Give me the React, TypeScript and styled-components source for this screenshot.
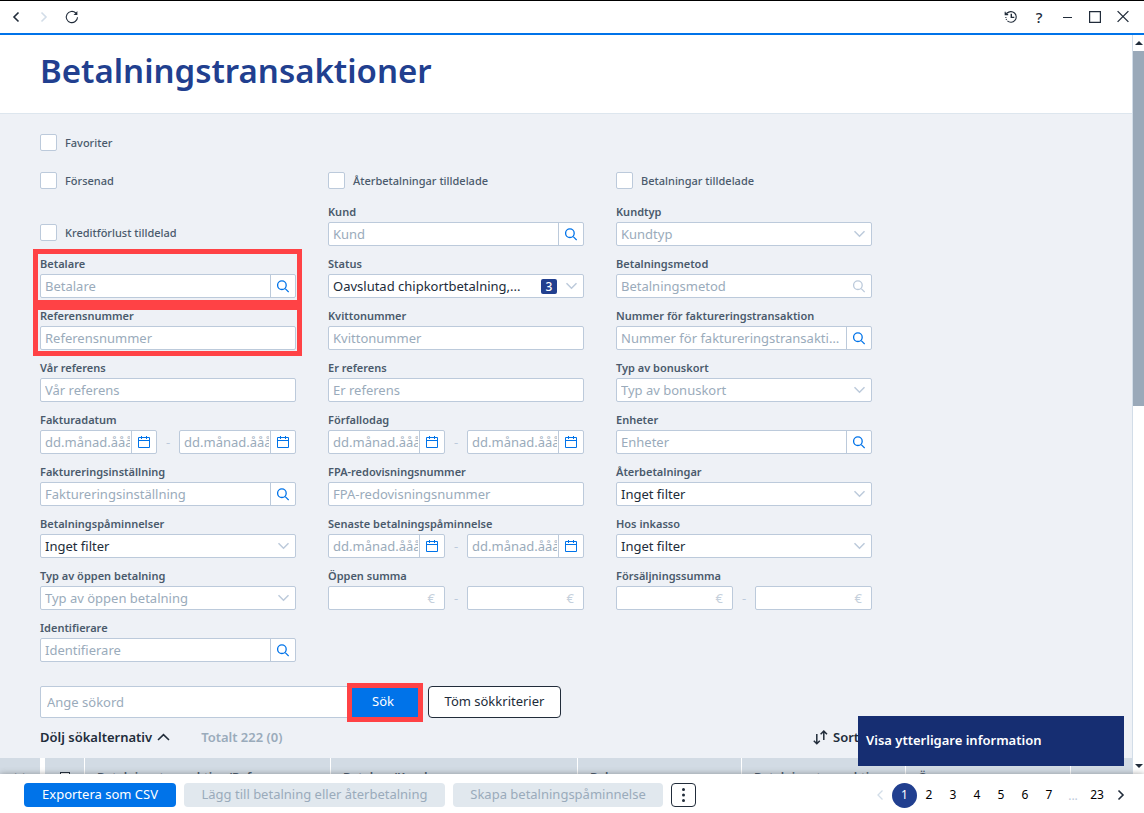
import React, { useId } from "react";
import styled, { createGlobalStyle } from "styled-components";

const color = {
  blue: "#0073e9",
  navy: "#213f8f",
  ink: "#212c3a",
  label: "#4a5a6c",
  muted: "#9aabbb",
  line: "#bccadb",
  faint: "#d2dde8",
  panel: "#eef1f6",
  head: "#d2dbe4",
  mark: "#ff4245",
};

const GlobalStyle = createGlobalStyle`
  *, *::before, *::after { box-sizing: border-box; }
  body {
    margin: 0;
    font-family: "Noto Sans", "Open Sans", sans-serif;
    font-size: 13px;
    color: ${color.ink};
    background: #fff;
  }
  button, input, select { font: inherit; color: inherit; }
  button { cursor: pointer; }
`;

const Window = styled.div`
  display: flex;
  flex-direction: column;
  height: 100vh;
  border-top: 1px solid #000;
`;

const TitleBar = styled.header`
  display: flex;
  flex: none;
  align-items: center;
  justify-content: space-between;
  height: 34px;
  padding: 0 9px 0 4px;
  border-bottom: 2px solid ${color.blue};
`;

const IconGroup = styled.div`
  display: flex;
  gap: 4px;
`;

const IconButton = styled.button<{ $faint?: boolean }>`
  display: flex;
  align-items: center;
  justify-content: center;
  width: 24px;
  height: 24px;
  padding: 0 0 1px;
  border: 0;
  background: none;
  font-weight: 500;
  font-size: 15px;
  color: ${(p) => (p.$faint ? color.faint : color.ink)};
`;

const Viewport = styled.div`
  display: flex;
  flex: 1;
  min-height: 0;
`;

const Content = styled.main`
  flex: 1;
  min-width: 0;
  overflow: hidden;
  border-right: 1px solid ${color.faint};
  background: ${color.panel};
`;

const PageHeader = styled.div`
  height: 79px;
  padding: 12px 40px;
  border-bottom: 1px solid #dde6ee;
  background: #fff;
`;

const Title = styled.h1`
  margin: 0;
  font-size: 33px;
  line-height: 48px;
  font-weight: 600;
  color: ${color.navy};
`;

const ScrollTrack = styled.div`
  display: flex;
  flex-direction: column;
  align-items: center;
  justify-content: space-between;
  flex: none;
  width: 11px;
  overflow: hidden;
`;

const ArrowBox = styled.span`
  display: flex;
  align-items: center;
  justify-content: center;
  height: 16px;
`;

const Thumb = styled.div`
  flex: none;
  width: 11px;
  height: 48%;
  margin-bottom: auto;
  background: #9aa9b9;
`;

const Filters = styled.form`
  padding: 20px 40px 0;
`;

const CheckRow = styled.div<{ $after: number }>`
  display: grid;
  grid-template-columns: repeat(3, 256px);
  column-gap: 32px;
  margin-bottom: ${(p) => p.$after}px;
`;

const CheckLabel = styled.label<{ $inGrid?: boolean }>`
  display: flex;
  align-items: center;
  align-self: end;
  gap: 8px;
  height: 17px;
  margin-bottom: ${(p) => (p.$inGrid ? 5 : 0)}px;
  font-size: 11px;
  line-height: 17px;
  font-weight: 500;
  color: ${color.label};
`;

const CheckBox = styled.input`
  appearance: none;
  flex: none;
  width: 17px;
  height: 17px;
  margin: 0;
  border: 1px solid ${color.line};
  border-radius: 2px;
  background: #fff;
`;

const FilterGrid = styled.div`
  display: grid;
  grid-template-columns: repeat(3, 256px);
  gap: 10px 32px;
`;

const FieldBox = styled.div`
  position: relative;
  min-width: 0;
`;

const FieldLabel = styled.label`
  display: block;
  height: 16px;
  margin-bottom: 2px;
  font-size: 11px;
  line-height: 16px;
  font-weight: 600;
  white-space: nowrap;
  color: ${color.label};
`;

const Control = styled.div`
  position: relative;
  display: flex;
  flex: 1;
  min-width: 0;
  height: 24px;
  border: 1px solid ${color.line};
  border-radius: 2px;
  background: #fff;
`;

const TextInput = styled.input`
  flex: 1;
  width: 0;
  min-width: 0;
  padding: 0;
  margin: 0 2px 0 4px;
  border: 0;
  outline: 0;
  background: none;
  text-overflow: ellipsis;
  &::placeholder { color: ${color.muted}; opacity: 1; }
`;

const DateInput = styled(TextInput)`
  margin-right: 1px;
  text-overflow: clip;
`;

const SideButton = styled.button<{ $plain?: boolean }>`
  display: flex;
  flex: none;
  align-items: center;
  justify-content: center;
  width: 25px;
  padding: 0;
  border: 0;
  border-left: ${(p) => (p.$plain ? "0" : `1px solid ${color.line}`)};
  background: none;
  color: ${(p) => (p.$plain ? color.line : color.blue)};
`;

const Select = styled.select<{ $empty?: boolean }>`
  appearance: none;
  flex: 1;
  min-width: 0;
  padding: 0 28px 0 4px;
  border: 0;
  outline: 0;
  background: none;
  color: ${(p) => (p.$empty ? color.muted : color.ink)};
`;

const SelectMark = styled.span`
  position: absolute;
  top: 0;
  right: 5px;
  display: flex;
  align-items: center;
  gap: 8px;
  height: 22px;
  color: ${color.line};
  pointer-events: none;
`;

const CountBadge = styled.span`
  width: 16px;
  height: 15px;
  border-radius: 2px;
  background: ${color.navy};
  font-size: 12px;
  line-height: 15px;
  font-weight: 500;
  text-align: center;
  color: #fff;
`;

const Range = styled.div`
  display: flex;
  align-items: center;
`;

const Dash = styled.span`
  width: 22px;
  text-align: center;
  line-height: 24px;
  color: ${color.line};
`;

const Currency = styled.span`
  padding-right: 9px;
  line-height: 22px;
  color: #c5d0dc;
`;

const Highlight = styled.span<{ $inset: string }>`
  position: absolute;
  z-index: 1;
  inset: ${(p) => p.$inset};
  border: 5px solid ${color.mark};
  pointer-events: none;
`;

const SearchRow = styled.div`
  display: flex;
  margin-top: 24px;
`;

const SearchInput = styled.input`
  width: 308px;
  height: 32px;
  padding: 0 6px;
  border: 1px solid ${color.line};
  border-radius: 2px 0 0 2px;
  outline: 0;
  background: #fff;
  &::placeholder { color: ${color.muted}; opacity: 1; }
`;

const SubmitButton = styled.button`
  position: relative;
  width: 72px;
  padding: 0 2px 2px 0;
  border: 0;
  background: ${color.blue};
  color: #fff;
`;

const ClearButton = styled.button`
  width: 133px;
  margin-left: 8px;
  padding: 0 0 2px;
  border: 1px solid ${color.ink};
  border-radius: 4px;
  background: #fff;
`;

const SummaryRow = styled.div`
  display: flex;
  align-items: center;
  height: 40px;
  padding: 0 40px 2px;
`;

const TextButton = styled.button`
  display: flex;
  align-items: center;
  gap: 5px;
  padding: 0;
  border: 0;
  background: none;
  font-weight: 600;
`;

const Total = styled.span`
  flex: 1;
  margin-left: 31px;
  font-weight: 600;
  color: ${color.muted};
`;

const SortButton = styled(TextButton)`
  width: 279px;
`;

const ResultTable = styled.table`
  width: 100%;
  table-layout: fixed;
  border-collapse: separate;
  border-spacing: 0;
  font-size: 12px;
`;

const HeadCell = styled.th<{ $width?: number; $line?: number; $center?: boolean }>`
  width: ${(p) => (p.$width ? `${p.$width}px` : "auto")};
  height: 38px;
  padding: ${(p) => (p.$center ? "0" : "0 0 0 12px")};
  border-right: ${(p) => p.$line ?? 1}px solid #fff;
  background: ${color.head};
  font-weight: 600;
  text-align: ${(p) => (p.$center ? "center" : "left")};
  white-space: nowrap;
  overflow: hidden;
  text-overflow: ellipsis;
  color: ${color.label};
`;

const HeadCheck = styled.input`
  appearance: none;
  display: block;
  width: 10px;
  height: 10px;
  margin: 0 auto;
  border: 1px solid ${color.ink};
  background: #fff;
`;

const Footer = styled.footer`
  position: relative;
  display: flex;
  flex: none;
  align-items: center;
  justify-content: space-between;
  height: 39px;
  padding: 3px 11px 0 24px;
  background: #fff;
  box-shadow: 0 0 6px rgba(60, 60, 60, 0.45);
`;

const Actions = styled.div`
  display: flex;
  gap: 8px;
`;

const ActionButton = styled.button<{ $width: number }>`
  width: ${(p) => p.$width}px;
  height: 24px;
  padding: 0 0 2px;
  border: 0;
  border-radius: 4px;
  background: ${color.blue};
  color: #fff;
  &:disabled { background: #e1e8ee; color: ${color.muted}; cursor: default; }
`;

const MoreButton = styled.button`
  display: flex;
  align-items: center;
  justify-content: center;
  width: 25px;
  height: 24px;
  padding: 0;
  border: 1px solid ${color.ink};
  border-radius: 4px;
  background: #fff;
`;

const Pager = styled.nav`
  display: flex;
  align-items: center;
`;

const PageButton = styled.button<{ $current?: boolean }>`
  width: ${(p) => (p.$current ? 25 : 24)}px;
  height: ${(p) => (p.$current ? 25 : 24)}px;
  padding: 0 0 2px;
  border: 0;
  border-radius: 50%;
  background: ${(p) => (p.$current ? color.navy : "none")};
  font-size: 12px;
  color: ${(p) => (p.$current ? "#fff" : "#000")};
`;

const Ellipsis = styled.span`
  width: 24px;
  text-align: center;
  font-size: 12px;
  color: ${color.line};
`;

const InfoToast = styled.button`
  position: absolute;
  right: 20px;
  bottom: 47px;
  width: 266px;
  height: 50px;
  padding: 0 8px 2px;
  border: 0;
  background: #162e72;
  font-weight: 600;
  text-align: left;
  color: #fff;
`;

const Svg = ({ w, h, d, sw = 1.3 }: { w: number; h: number; d: string; sw?: number }) => (
  <svg width={w} height={h} viewBox={`0 0 ${w} ${h}`} fill="none" stroke="currentColor" strokeWidth={sw} aria-hidden="true">
    <path d={d} />
  </svg>
);

const SearchIcon = () => <Svg w={12} h={13} sw={1.3} d="M9.2 5.2a4.3 4.3 0 1 1-8.6 0a4.3 4.3 0 1 1 8.6 0zM8 8.4l3.7 3.7" />;
const CalendarIcon = () => (
  <Svg w={12} h={12} sw={1} d="M.5 1.5h11v10H.5zM.5 4.5h11M3.5 0v3M8.5 0v3" />
);
const ChevronDown = () => <Svg w={13} h={8} sw={1.5} d="M1.5 1.2l5 5 5-5" />;
const ArrowUp = () => (
  <svg width="8" height="4" viewBox="0 0 8 4" aria-hidden="true"><path d="M0 4L4 0l4 4z" fill={color.ink} /></svg>
);
const ArrowDown = () => (
  <svg width="8" height="4" viewBox="0 0 8 4" aria-hidden="true"><path d="M0 0h8L4 4z" fill={color.ink} /></svg>
);

const Check = ({ text, inGrid }: { text: string; inGrid?: boolean }) => (
  <CheckLabel $inGrid={inGrid}>
    <CheckBox type="checkbox" />
    {text}
  </CheckLabel>
);

type Kind = "text" | "lookup" | "search" | "select" | "dates" | "amounts";

interface FieldProps {
  label: string;
  kind: Kind;
  value?: string;
  count?: number;
  highlight?: string;
}

const DateBox = ({ id, name }: { id?: string; name: string }) => (
  <Control>
    <DateInput type="text" id={id} aria-label={id ? undefined : name} placeholder="dd.månad.åååå" />
    <SideButton type="button" aria-label="Välj datum"><CalendarIcon /></SideButton>
  </Control>
);

const AmountBox = ({ id, name }: { id?: string; name: string }) => (
  <Control>
    <TextInput type="text" id={id} aria-label={id ? undefined : name} />
    <Currency>€</Currency>
  </Control>
);

const Field = ({ label, kind, value, count, highlight }: FieldProps) => {
  const id = useId();
  return (
    <FieldBox>
      <FieldLabel htmlFor={id}>{label}</FieldLabel>
      {(kind === "text" || kind === "lookup" || kind === "search") && (
        <Control>
          <TextInput type="text" id={id} placeholder={label} />
          {kind !== "text" && (
            <SideButton type="button" $plain={kind === "search"} aria-label="Sök">
              <SearchIcon />
            </SideButton>
          )}
        </Control>
      )}
      {kind === "select" && (
        <Control>
          <Select id={id} $empty={!value}>
            <option>{value ?? label}</option>
          </Select>
          <SelectMark>
            {count && <CountBadge>{count}</CountBadge>}
            <ChevronDown />
          </SelectMark>
        </Control>
      )}
      {kind === "dates" && (
        <Range>
          <DateBox id={id} name={label} />
          <Dash>-</Dash>
          <DateBox name={label} />
        </Range>
      )}
      {kind === "amounts" && (
        <Range>
          <AmountBox id={id} name={label} />
          <Dash>-</Dash>
          <AmountBox name={label} />
        </Range>
      )}
      {highlight && <Highlight $inset={highlight} />}
    </FieldBox>
  );
};

const fields: FieldProps[] = [
  { label: "Kund", kind: "lookup" },
  { label: "Kundtyp", kind: "select" },
  { label: "Betalare", kind: "lookup", highlight: "-7px -6px -7px -7px" },
  { label: "Status", kind: "select", value: "Oavslutad chipkortbetalning,...", count: 3 },
  { label: "Betalningsmetod", kind: "search" },
  { label: "Referensnummer", kind: "text", highlight: "-3px -6px -6px -7px" },
  { label: "Kvittonummer", kind: "text" },
  { label: "Nummer för faktureringstransaktion", kind: "lookup" },
  { label: "Vår referens", kind: "text" },
  { label: "Er referens", kind: "text" },
  { label: "Typ av bonuskort", kind: "select" },
  { label: "Fakturadatum", kind: "dates" },
  { label: "Förfallodag", kind: "dates" },
  { label: "Enheter", kind: "lookup" },
  { label: "Faktureringsinställning", kind: "lookup" },
  { label: "FPA-redovisningsnummer", kind: "text" },
  { label: "Återbetalningar", kind: "select", value: "Inget filter" },
  { label: "Betalningspåminnelser", kind: "select", value: "Inget filter" },
  { label: "Senaste betalningspåminnelse", kind: "dates" },
  { label: "Hos inkasso", kind: "select", value: "Inget filter" },
  { label: "Typ av öppen betalning", kind: "select" },
  { label: "Öppen summa", kind: "amounts" },
  { label: "Försäljningssumma", kind: "amounts" },
  { label: "Identifierare", kind: "lookup" },
];

export default function App() {
  return (
    <Window>
      <GlobalStyle />
      <TitleBar>
        <IconGroup>
          <IconButton aria-label="Bakåt"><Svg w={8} h={12} sw={1.6} d="M6.5 1.5L2 6l4.5 4.5" /></IconButton>
          <IconButton aria-label="Framåt" $faint><Svg w={8} h={12} sw={1.6} d="M1.5 1.5L6 6l-4.5 4.5" /></IconButton>
          <IconButton aria-label="Uppdatera">
            <svg width="14" height="14" viewBox="0 0 14 14" fill="none" stroke="currentColor" strokeWidth="1.1" aria-hidden="true">
              <path d="M12.5 7.2A5.6 5.6 0 1 1 10.8 3" />
              <path d="M12.4 1v4H8.6z" fill="currentColor" stroke="none" />
            </svg>
          </IconButton>
        </IconGroup>
        <IconGroup>
          <IconButton aria-label="Historik">
            <svg width="14" height="14" viewBox="0 0 14 14" fill="none" stroke="currentColor" strokeWidth="1.1" aria-hidden="true">
              <path d="M3 3.4A5.3 5.3 0 1 1 3.4 10.9" />
              <path d="M2.6 9.9A5.3 5.3 0 0 1 1.9 6.6" strokeDasharray="1 1" />
              <path d="M1.2 1.8v2.8h3M1.2 4.4l2.6-2" />
              <path d="M7.3 3.8v3.6h3" strokeWidth="1.4" />
            </svg>
          </IconButton>
          <IconButton aria-label="Hjälp">?</IconButton>
          <IconButton aria-label="Minimera"><Svg w={9} h={13} sw={1} d="M0 7.5h9" /></IconButton>
          <IconButton aria-label="Maximera"><Svg w={12} h={13} sw={1.2} d="M.6 1.6h10.8v10.8H.6z" /></IconButton>
          <IconButton aria-label="Stäng"><Svg w={12} h={13} d="M.6 1.1l10.8 10.8M11.4 1.1L.6 11.9" /></IconButton>
        </IconGroup>
      </TitleBar>

      <Viewport>
        <Content>
          <PageHeader>
            <Title>Betalningstransaktioner</Title>
          </PageHeader>
          <Filters onSubmit={(e) => e.preventDefault()}>
            <CheckRow $after={21}>
              <Check text="Favoriter" />
            </CheckRow>
            <CheckRow $after={15}>
              <Check text="Försenad" />
              <Check text="Återbetalningar tilldelade" />
              <Check text="Betalningar tilldelade" />
            </CheckRow>
            <FilterGrid>
              <Check text="Kreditförlust tilldelad" inGrid />
              {fields.map((f) => (
                <Field key={f.label} {...f} />
              ))}
            </FilterGrid>
            <SearchRow>
              <SearchInput type="text" placeholder="Ange sökord" aria-label="Ange sökord" />
              <SubmitButton type="submit">
                Sök
                <Highlight $inset="-3px -3px -4px -1px" />
              </SubmitButton>
              <ClearButton type="button">Töm sökkriterier</ClearButton>
            </SearchRow>
          </Filters>
          <SummaryRow>
            <TextButton type="button">
              Dölj sökalternativ
              <Svg w={13} h={8} sw={1.6} d="M1 7l5.5-5.3L12 7" />
            </TextButton>
            <Total>Totalt 222 (0)</Total>
            <SortButton type="button">
              <Svg w={15} h={15} sw={1.5} d="M3.8 4v9.6M.8 10.8l3 3 3-3M10.8 10V1.2M7.6 4.2l3.2-3.1L14 4.2" />
              Sortera
            </SortButton>
          </SummaryRow>
          <ResultTable>
            <thead>
              <tr>
                <HeadCell $width={45} $line={5} $center>t t</HeadCell>
                <HeadCell $width={40} $center>
                  <HeadCheck type="checkbox" aria-label="Markera alla" />
                </HeadCell>
                <HeadCell $width={246}>Betalningstransaktion/Refe...</HeadCell>
                <HeadCell $width={247}>Betalare/Kund</HeadCell>
                <HeadCell $width={164}>Belopp</HeadCell>
                <HeadCell $width={164}>Betalningstransakti...</HeadCell>
                <HeadCell $width={165}>Öppen</HeadCell>
                <HeadCell $line={0} />
              </tr>
            </thead>
          </ResultTable>
        </Content>
        <ScrollTrack>
          <ArrowBox><ArrowUp /></ArrowBox>
          <Thumb />
          <ArrowBox><ArrowDown /></ArrowBox>
        </ScrollTrack>
      </Viewport>

      <Footer>
        <Actions>
          <ActionButton $width={152}>Exportera som CSV</ActionButton>
          <ActionButton $width={261} disabled>Lägg till betalning eller återbetalning</ActionButton>
          <ActionButton $width={210} disabled>Skapa betalningspåminnelse</ActionButton>
          <MoreButton aria-label="Fler åtgärder">
            <svg width="3" height="14" viewBox="0 0 3 14" fill={color.ink} aria-hidden="true">
              <circle cx="1.5" cy="1.6" r="1.5" />
              <circle cx="1.5" cy="7" r="1.5" />
              <circle cx="1.5" cy="12.4" r="1.5" />
            </svg>
          </MoreButton>
        </Actions>
        <Pager aria-label="Sidor">
          <IconButton aria-label="Föregående sida" $faint><Svg w={8} h={12} d="M6.5 1.5L2 6l4.5 4.5" /></IconButton>
          <PageButton $current>1</PageButton>
          {["2", "3", "4", "5", "6", "7"].map((n) => (
            <PageButton key={n}>{n}</PageButton>
          ))}
          <Ellipsis>...</Ellipsis>
          <PageButton>23</PageButton>
          <IconButton aria-label="Nästa sida"><Svg w={8} h={12} sw={1.6} d="M1.5 1.5L6 6l-4.5 4.5" /></IconButton>
        </Pager>
        <InfoToast type="button">Visa ytterligare information</InfoToast>
      </Footer>
    </Window>
  );
}
